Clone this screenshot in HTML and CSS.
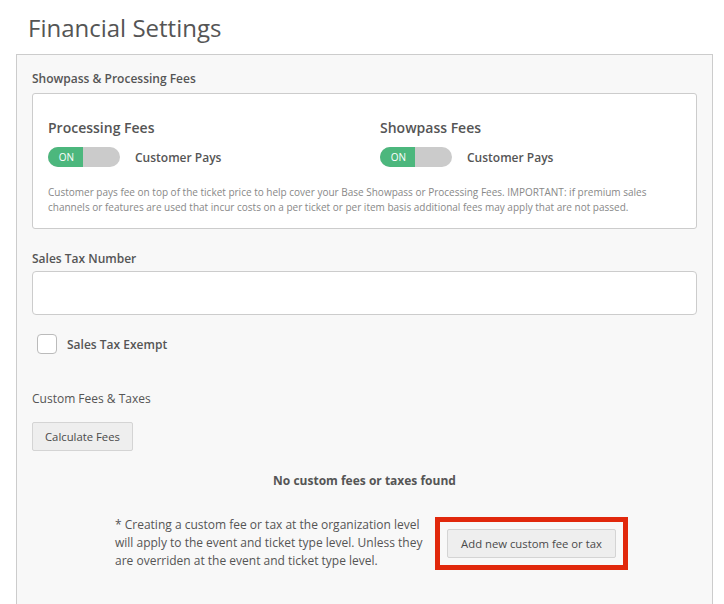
FILE: index.html
```html
<!DOCTYPE html>
<html>
<head>
<meta charset="utf-8">
<link rel="stylesheet" href="styles.css">
</head>
<body>
<div class="page">
  <h1 class="title">Financial Settings</h1>
  <div class="panel">
    <div class="section-label">Showpass &amp; Processing Fees</div>
    <div class="card">
      <div class="fee-row">
        <div class="fee-col">
          <div class="fee-title">Processing Fees</div>
          <div class="toggle-row">
            <span class="toggle"><span class="toggle-on">ON</span><span class="toggle-off"></span></span>
            <span class="toggle-label">Customer Pays</span>
          </div>
        </div>
        <div class="fee-col">
          <div class="fee-title">Showpass Fees</div>
          <div class="toggle-row">
            <span class="toggle"><span class="toggle-on">ON</span><span class="toggle-off"></span></span>
            <span class="toggle-label">Customer Pays</span>
          </div>
        </div>
      </div>
      <p class="help">Customer pays fee on top of the ticket price to help cover your Base Showpass or Processing Fees. IMPORTANT: if premium sales channels or features are used that incur costs on a per ticket or per item basis additional fees may apply that are not passed.</p>
    </div>

    <div class="field-label">Sales Tax Number</div>
    <input class="text-input" type="text">

    <label class="check-row"><span class="checkbox"></span><span class="check-label">Sales Tax Exempt</span></label>

    <div class="plain-label">Custom Fees &amp; Taxes</div>
    <button class="btn">Calculate Fees</button>

    <div class="empty">No custom fees or taxes found</div>

    <div class="add-row">
      <p class="note">* Creating a custom fee or tax at the organization level will apply to the event and ticket type level. Unless they are overriden at the event and ticket type level.</p>
      <div class="highlight"><button class="btn btn-add">Add new custom fee or tax</button></div>
    </div>
  </div>
</div>
</body>
</html>
```
FILE: styles.css
```css
html, body {
  margin: 0;
  padding: 0;
  background: #fff;
}
body {
  font-family: "Open Sans", "DejaVu Sans", sans-serif;
  color: #555;
}
.page {
  padding-top: 13px;
}
.title {
  margin: 0 0 12px 28px;
  font-size: 24px;
  font-weight: 400;
  line-height: 29px;
  color: #555;
}
.panel {
  margin-left: 16px;
  width: 697px;
  height: 560px;
  box-sizing: border-box;
  background: #f8f8f8;
  border: 1px solid #ccc;
  border-bottom: none;
  padding: 15px 15px 0 15px;
}
.section-label {
  font-size: 12px;
  font-weight: 600;
  line-height: 17px;
  margin-bottom: 6px;
}
.card {
  background: #fff;
  border: 1px solid #ccc;
  border-radius: 3px;
  padding: 24px 15px 13px 15px;
}
.fee-row {
  display: flex;
}
.fee-col {
  width: 332px;
  flex-shrink: 0;
}
.fee-col + .fee-col {
  flex: 1;
  width: auto;
}
.fee-title {
  font-size: 14px;
  font-weight: 600;
  line-height: 20px;
  margin-bottom: 9px;
}
.toggle-row {
  display: flex;
  align-items: center;
  gap: 15px;
}
.toggle {
  display: flex;
  width: 72px;
  height: 20px;
  border-radius: 10px;
  overflow: hidden;
  background: #cbcbcb;
}
.toggle-on {
  width: 35px;
  background: #4cb77d;
  color: #fff;
  font-size: 10px;
  line-height: 20px;
  text-align: center;
  padding-left: 2px;
  box-sizing: border-box;
}
.toggle-off {
  flex: 1;
}
.toggle-label {
  font-size: 12px;
  font-weight: 600;
}
.help {
  margin: 18px 0 0 0;
  font-size: 10px;
  line-height: 15px;
  color: #888;
}
.field-label {
  margin-top: 21px;
  font-size: 12px;
  font-weight: 600;
  line-height: 17px;
}
.text-input {
  display: block;
  margin-top: 4px;
  width: 100%;
  height: 44px;
  box-sizing: border-box;
  border: 1px solid #ccc;
  border-radius: 4px;
  background: #fff;
  outline: none;
}
.check-row {
  display: flex;
  align-items: center;
  gap: 10px;
  margin-top: 19px;
  margin-left: 5px;
}
.checkbox {
  width: 18px;
  height: 18px;
  border: 1px solid #bbb;
  border-radius: 4px;
  background: #fff;
}
.check-label {
  font-size: 12px;
  font-weight: 600;
}
.plain-label {
  margin-top: 36px;
  font-size: 12px;
  line-height: 17px;
}
.btn {
  display: block;
  font-family: "Open Sans", "DejaVu Sans", sans-serif;
  font-size: 11.3px;
  color: #4a4a4a;
  background: #eee;
  border: 1px solid #d4d4d4;
  border-radius: 2px;
  height: 29px;
  padding: 0 12px;
  margin-top: 15px;
}
.empty {
  margin-top: 21px;
  text-align: center;
  font-size: 12px;
  font-weight: 700;
  line-height: 17px;
}
.add-row {
  display: flex;
  justify-content: center;
  align-items: center;
  gap: 12px;
  margin-top: 27px;
  padding-left: 14px;
}
.note {
  margin: 0;
  width: 308px;
  font-size: 12px;
  line-height: 18px;
}
.highlight {
  border: 5px solid #e1280c;
  padding: 7px;
}
.btn-add {
  margin: 0;
  width: 169px;
  padding: 0;
}
```
